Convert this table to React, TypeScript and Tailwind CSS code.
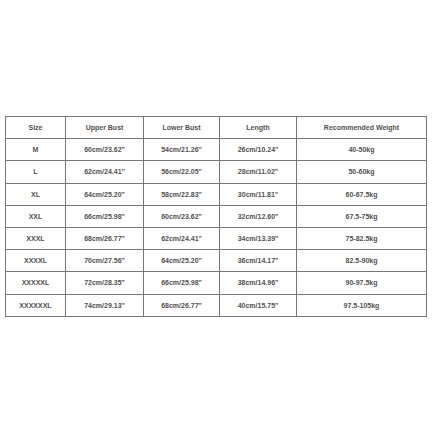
import React from "react";

const rows = [
  ["M", "60cm/23.62\"", "54cm/21.26\"", "26cm/10.24\"", "40-50kg"],
  ["L", "62cm/24.41\"", "56cm/22.05\"", "28cm/11.02\"", "50-60kg"],
  ["XL", "64cm/25.20\"", "58cm/22.83\"", "30cm/11.81\"", "60-67.5kg"],
  ["XXL", "66cm/25.98\"", "60cm/23.62\"", "32cm/12.60\"", "67.5-75kg"],
  ["XXXL", "68cm/26.77\"", "62cm/24.41\"", "34cm/13.39\"", "75-82.5kg"],
  ["XXXXL", "70cm/27.56\"", "64cm/25.20\"", "36cm/14.17\"", "82.5-90kg"],
  ["XXXXXL", "72cm/28.35\"", "66cm/25.98\"", "38cm/14.96\"", "90-97.5kg"],
  ["XXXXXXL", "74cm/29.13\"", "68cm/26.77\"", "40cm/15.75\"", "97.5-105kg"],
];
const head = ["Size", "Upper Bust", "Lower Bust", "Length", "Recommended Weight"];
const widths = ["w-[60px]", "w-[78px]", "w-[76px]", "w-[77px]", "w-[130px]"];

export default function App() {
  return (
    <div className="w-[433px] h-[433px] bg-white flex flex-col items-start pt-[116px] pl-[5px] font-['Liberation_Sans',Arial,sans-serif]">
      <table className="border-collapse border border-[#777] text-[7px] font-bold text-[#505050] leading-none">
        <thead>
          <tr className="h-[22.2px]">
            {head.map((h, i) => (
              <th key={i} className={`${widths[i]} border border-[#777] text-center font-bold`}>{h}</th>
            ))}
          </tr>
        </thead>
        <tbody>
          {rows.map((r, ri) => (
            <tr key={ri} className="h-[22.2px]">
              {r.map((c, ci) => (
                <td key={ci} className={`${widths[ci]} border border-[#777] text-center`}>{c}</td>
              ))}
            </tr>
          ))}
        </tbody>
      </table>
    </div>
  );
}
